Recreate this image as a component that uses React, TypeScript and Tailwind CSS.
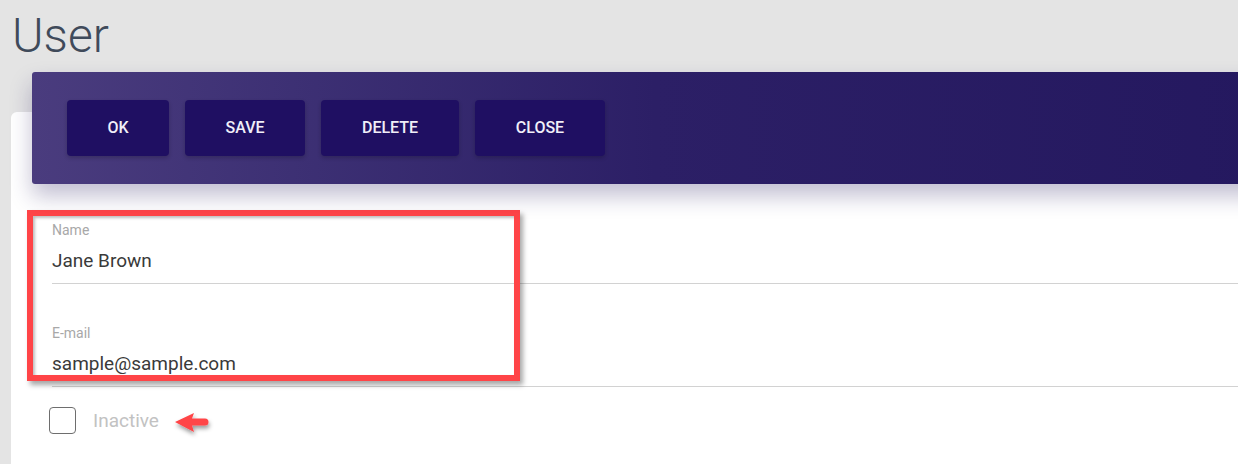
import React from 'react'

const buttons = [
  { label: 'OK', w: 'w-[102px]' },
  { label: 'SAVE', w: 'w-[120px]' },
  { label: 'DELETE', w: 'w-[138px]' },
  { label: 'CLOSE', w: 'w-[130px]' },
]

function Field({ label, value }: { label: string; value: string }) {
  return (
    <div className="border-b border-[#d2d2d2] pb-[10px]">
      <div className="text-[14px] leading-[16px] text-[#a8a8a8]">{label}</div>
      <div className="mt-[11px] text-[19px] leading-[24px] text-[#3a3a3a]">{value}</div>
    </div>
  )
}

export default function App() {
  return (
    <div className="relative h-[464px] overflow-hidden bg-[#e4e4e4] font-['Roboto',sans-serif]">
      <h1 className="h-[72px] pl-[12px] pt-[6px] text-[48px] font-light leading-[60px] text-[#3f4a5a]">User</h1>

      <div className="relative -mr-[40px] ml-[11px] mt-[40px] flex h-[352px] flex-col rounded-tl-[6px] bg-white">
        <div className="relative z-10 -mt-[40px] ml-[21px] flex h-[112px] shrink-0 items-start gap-4 rounded-[3px] bg-gradient-to-r from-[#4a3c7e] via-[#2c1f66] to-[#24185f] pl-[35px] pt-[28px] shadow-[0_12px_22px_rgba(36,25,95,0.28)]">
          {buttons.map(b => (
            <button
              key={b.label}
              className={`${b.w} h-[56px] rounded-[4px] bg-[#1f0f62] text-[16px] font-medium text-[#f0eef8] shadow-[0_2px_4px_rgba(0,0,0,0.2)]`}>
              {b.label}
            </button>
          ))}
        </div>

        <div className="pl-[41px] pt-[38px]">
          <Field label="Name" value="Jane Brown" />
          <div className="mt-[41px]">
            <Field label="E-mail" value="sample@sample.com" />
          </div>
          <div className="-ml-[3px] mt-[20px] flex items-center gap-[17px]">
            <div className="h-[27px] w-[27px] rounded-[4px] border-[1.5px] border-[#6e6e6e]" />
            <span className="text-[19px] leading-[24px] text-[#c2c2c2]">Inactive</span>
          </div>
        </div>
      </div>

      {/* annotation overlay */}
      <div className="absolute left-[27px] top-[210px] h-[171px] w-[493px] border-[6px] border-[#ff4447] shadow-[3px_4px_5px_rgba(0,0,0,0.35),inset_2px_2px_3px_rgba(0,0,0,0.25)]" />
      <svg className="absolute left-[170px] top-[406px]" width="50" height="36" viewBox="0 0 50 36">
        <defs>
          <filter id="sh" x="-30%" y="-30%" width="160%" height="180%">
            <feDropShadow dx="1" dy="3" stdDeviation="2" floodColor="#000" floodOpacity="0.4" />
          </filter>
        </defs>
        <path
          d="M5 16 L24 7 L22 12.5 L35 12.5 A3.5 3.5 0 0 1 35 19.5 L22 19.5 L24 26 Z"
          fill="#ff4447"
          filter="url(#sh)"
        />
      </svg>
    </div>
  )
}
